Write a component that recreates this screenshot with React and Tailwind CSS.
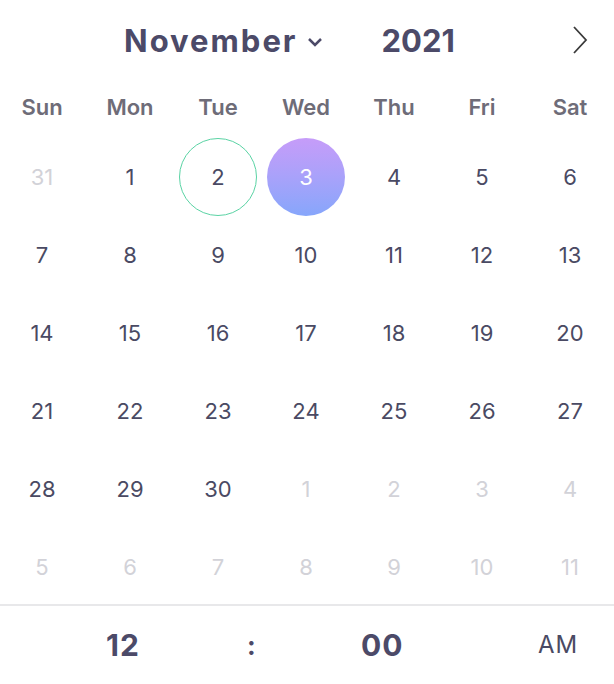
const weekdays = ['Sun', 'Mon', 'Tue', 'Wed', 'Thu', 'Fri', 'Sat']

const days = [
  [31, true], [1], [2], [3], [4], [5], [6],
  [7], [8], [9], [10], [11], [12], [13],
  [14], [15], [16], [17], [18], [19], [20],
  [21], [22], [23], [24], [25], [26], [27],
  [28], [29], [30], [1, true], [2, true], [3, true], [4, true],
  [5, true], [6, true], [7, true], [8, true], [9, true], [10, true], [11, true],
]

function Day({ n, muted, index }) {
  const firstRow = index < 7

  if (!muted && firstRow && n === 3) {
    return (
      <div className="flex h-[78px] items-center justify-center">
        <div className="flex h-[78px] w-[78px] items-center justify-center rounded-full bg-gradient-to-b from-[#c69cf9] to-[#86a6fb] text-white">
          {n}
        </div>
      </div>
    )
  }

  if (!muted && firstRow && n === 2) {
    return (
      <div className="flex h-[78px] items-center justify-center">
        <div className="flex h-[78px] w-[78px] items-center justify-center rounded-full border-[1.5px] border-[#5ad3a4] text-[#4a4a63]">
          {n}
        </div>
      </div>
    )
  }

  return (
    <div
      className={
        'flex h-[78px] items-center justify-center ' +
        (muted ? 'text-[#d2d2d8]' : 'text-[#4a4a63]')
      }
    >
      {n}
    </div>
  )
}

export default function App() {
  return (
    <div className="h-[684px] w-[614px] overflow-hidden bg-white font-['Inter',sans-serif]">
      <div className="relative flex h-[82px] items-center pl-[124px]">
        <span className="text-[31px] font-bold tracking-[2px] text-[#4c4a68]">November</span>
        {/* month dropdown caret */}
        <svg width="16" height="10" viewBox="0 0 16 10" className="ml-[9px] mt-[1px]">
          <polyline points="2,2 8,8 14,2" fill="none" stroke="#4c4a68" strokeWidth="2.5" />
        </svg>
        <span className="ml-[59px] text-[31px] font-bold text-[#4c4a68]">2021</span>
        <svg width="16" height="28" viewBox="0 0 16 28" className="absolute left-[572px] top-[26px]">
          <polyline points="2,1 14,14 2,27" fill="none" stroke="#3a3a3a" strokeWidth="1.8" />
        </svg>
      </div>

      <div className="-ml-[2px] grid grid-cols-[repeat(7,88px)]">
        {weekdays.map((d) => (
          <div key={d} className="flex h-[50px] items-center justify-center text-[22px] font-semibold text-[#6e6c78]">
            {d}
          </div>
        ))}
      </div>

      <div className="-ml-[2px] mt-[6px] grid grid-cols-[repeat(7,88px)] text-[22px]">
        {days.map(([n, muted], i) => (
          <Day key={i} n={n} muted={!!muted} index={i} />
        ))}
      </div>

      <div className="-mt-[2px] border-t-2 border-[#e8e8ea]">
        <div className="flex h-[78px] items-center">
          <span className="ml-[106px] w-[141px] text-[30px] font-bold tracking-[1px] text-[#4c4a68]">12</span>
          <span className="w-[10px] text-[26px] font-bold text-[#4c4a68]">:</span>
          <span className="ml-[104px] w-[177px] text-[30px] font-bold tracking-[1px] text-[#4c4a68]">00</span>
          <span className="text-[24px] tracking-[1px] text-[#4a4a63]">AM</span>
        </div>
      </div>
    </div>
  )
}
